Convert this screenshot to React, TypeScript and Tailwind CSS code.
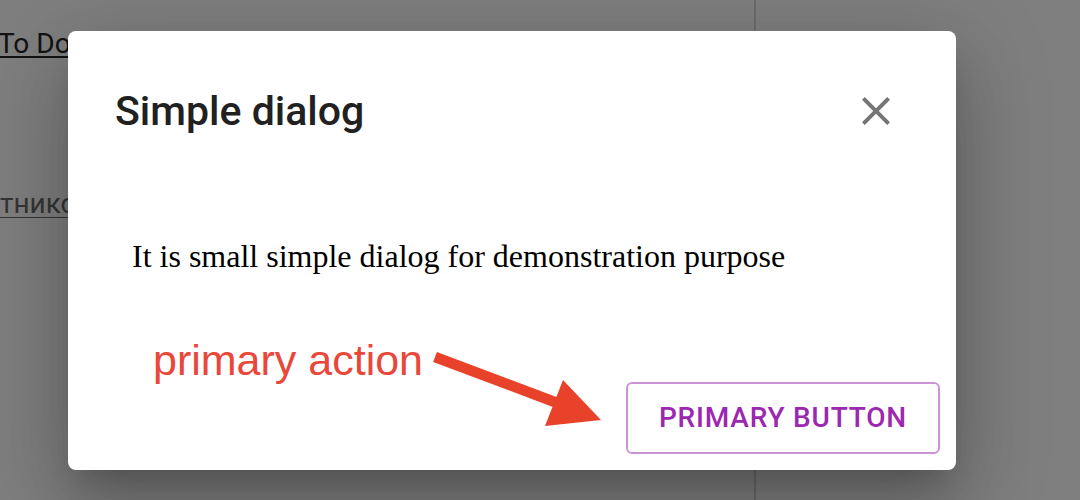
import React from 'react'

function CloseIcon() {
  return (
    <svg viewBox="0 0 24 24" className="w-12 h-12" fill="#757575">
      <path d="M19 6.41 17.59 5 12 10.59 6.41 5 5 6.41 10.59 12 5 17.59 6.41 19 12 13.41 17.59 19 19 17.59 13.41 12z" />
    </svg>
  )
}

function Arrow() {
  return (
    <svg className="absolute left-[420px] top-[340px]" width="190" height="95" viewBox="0 0 190 95">
      <line x1="15" y1="17" x2="140" y2="64" stroke="#e8432a" strokeWidth="10.5" />
      <polygon points="143,40 181,80 125,86" fill="#e8432a" />
    </svg>
  )
}

export default function App() {
  return (
    <div className="relative w-[1080px] h-[500px] overflow-hidden bg-white" style={{ fontFamily: 'Roboto, "Noto Sans", sans-serif' }}>
      {/* page behind the backdrop */}
      <div className="flex h-full">
        <div className="w-[754px] flex flex-col pt-[26px]">
          <a className="ml-[-2px] text-[28px] leading-9 text-[#262626] underline decoration-2 underline-offset-[3px]">To Do</a>
          <a className="mt-[124px] text-[28px] leading-9 text-[#6a6a6a] underline decoration-1 underline-offset-[4px]">тников</a>
        </div>
        <div className="w-[2px] h-full bg-[#d8d8d8]" />
        <div className="flex-1" />
      </div>

      {/* backdrop */}
      <div className="absolute inset-0 bg-black/50" />

      {/* dialog */}
      <div className="absolute left-[68px] top-[31px] w-[888px] h-[439px] bg-white rounded-[8px] flex flex-col shadow-[0_22px_30px_-14px_rgba(0,0,0,0.2),0_48px_76px_6px_rgba(0,0,0,0.14),0_18px_92px_16px_rgba(0,0,0,0.12)]">
        <div className="flex items-center justify-between pl-[47px] pr-[56px] pt-[60px]">
          <h2 className="text-[41px] leading-10 font-medium text-[#212121]">Simple dialog</h2>
          <button className="w-12 h-12 flex items-center justify-center -my-1">
            <CloseIcon />
          </button>
        </div>
        <div className="pl-[64px] pt-[109px]">
          <p className="text-[32px] leading-8 text-black" style={{ fontFamily: '"Liberation Serif", "Times New Roman", serif' }}>
            It is small simple dialog for demonstration purpose
          </p>
        </div>
        <div className="mt-auto flex justify-end p-4">
          <button className="h-[72px] px-[31px] rounded-[6px] border-2 border-[#cd93d7] text-[#9c27b0] text-[28px] font-medium tracking-[0.8px] uppercase">
            Primary Button
          </button>
        </div>
      </div>

      {/* annotation */}
      <div className="absolute left-[153px] top-[339px] text-[43px] leading-[43px] text-[#e9473a]" style={{ fontFamily: '"Liberation Sans", Arial, sans-serif' }}>
        primary action
      </div>
      <Arrow />
    </div>
  )
}
